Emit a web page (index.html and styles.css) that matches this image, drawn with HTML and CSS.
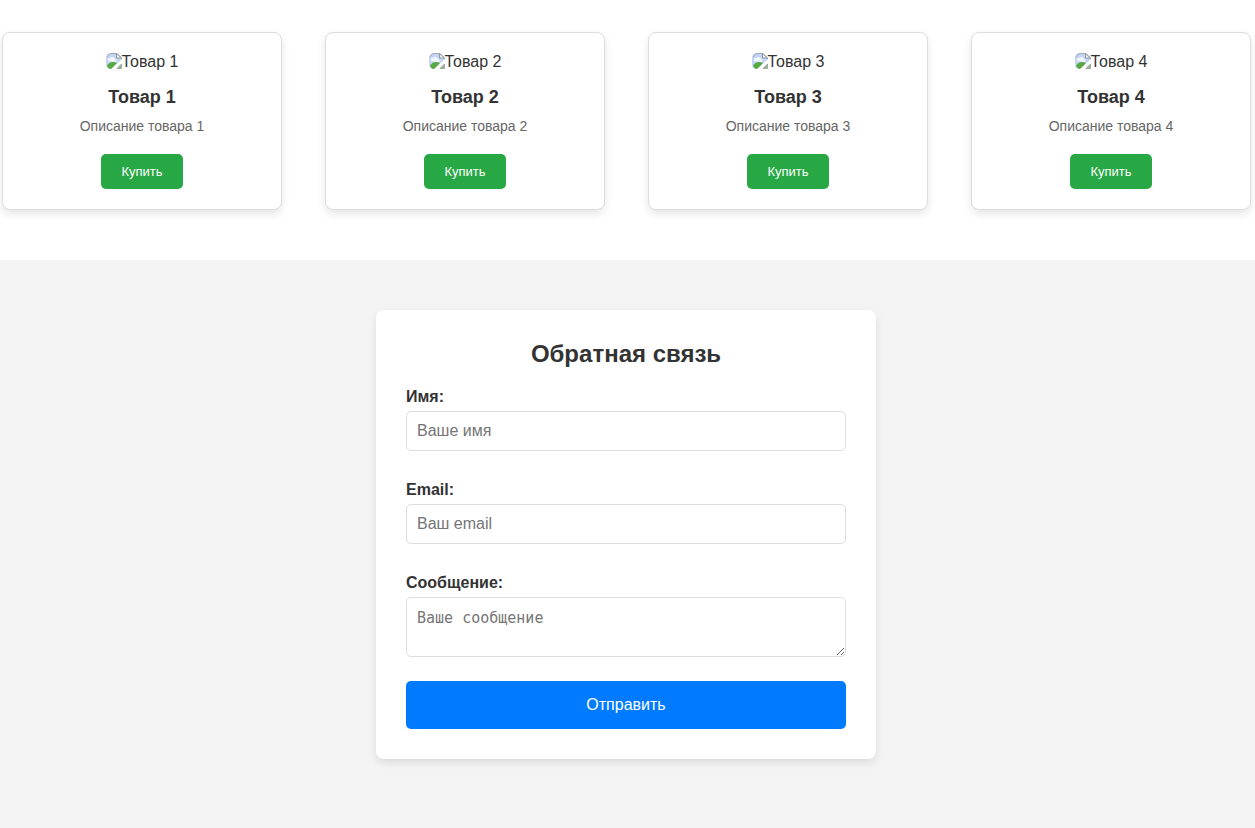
FILE: index.html
```
<!DOCTYPE html>
<html lang="ru">
<head>
    <meta charset="UTF-8">
    <meta name="viewport" content="width=device-width, initial-scale=1.0">
    <title>Магазин</title>
    <link rel="stylesheet" href="styles.css">
</head>
<body>
    <svg class="sprite" aria-hidden="true">
        <symbol id="no-image" viewBox="0 0 16 16">
            <path d="M5 0h6l4 4v4l-8 8H5a5 5 0 0 1-5-5V5a5 5 0 0 1 5-5z" fill="#c3d5f3"/>
            <path d="M2 8a2 2 0 0 1 2-3 3 3 0 0 1 5 1 2 2 0 0 1 1 3z" fill="#f3f7fd"/>
            <path d="M1 13c2-4 6-5 10-3l-5 6H5c-2 0-3-1-4-3z" fill="#58a942"/>
            <path d="M1 4a5 5 0 0 1 4-3.500h5.500L15.500 5v3" fill="none" stroke="#a3a9b3"/>
            <path d="M10.500 .500l5 4.500h-5z" fill="#f2f2f2" stroke="#8f96a1"/>
            <path d="M5 16L16 6v3l-7 7z" fill="#fff"/>
            <path d="M15.500 11v4.500H11z" fill="#8dbb86" stroke="#a5a5a5"/>
        </symbol>
    </svg>

    <!-- Товары -->
    <section class="products">
        <div class="product-card">
            <div class="product-image"><svg><use href="#no-image"/></svg>Товар 1</div>
            <h3>Товар 1</h3>
            <p>Описание товара 1</p>
            <button type="button">Купить</button>
        </div>
        <div class="product-card">
            <div class="product-image"><svg><use href="#no-image"/></svg>Товар 2</div>
            <h3>Товар 2</h3>
            <p>Описание товара 2</p>
            <button type="button">Купить</button>
        </div>
        <div class="product-card">
            <div class="product-image"><svg><use href="#no-image"/></svg>Товар 3</div>
            <h3>Товар 3</h3>
            <p>Описание товара 3</p>
            <button type="button">Купить</button>
        </div>
        <div class="product-card">
            <div class="product-image"><svg><use href="#no-image"/></svg>Товар 4</div>
            <h3>Товар 4</h3>
            <p>Описание товара 4</p>
            <button type="button">Купить</button>
        </div>
    </section>

    <!-- Обратная связь -->
    <section class="feedback">
        <form class="feedback-form">
            <h2>Обратная связь</h2>
            <div class="form-group">
                <label for="name">Имя:</label>
                <input type="text" id="name" name="name" placeholder="Ваше имя" required>
            </div>
            <div class="form-group">
                <label for="email">Email:</label>
                <input type="email" id="email" name="email" placeholder="Ваш email" required>
            </div>
            <div class="form-group">
                <label for="message">Сообщение:</label>
                <textarea id="message" name="message" placeholder="Ваше сообщение" required></textarea>
            </div>
            <button type="submit">Отправить</button>
        </form>
    </section>
</body>
</html>
```

FILE: styles.css
```
* {
    box-sizing: border-box;
    margin: 0;
    padding: 0;
}

body {
    font-family: Arial, "Liberation Sans", sans-serif;
    background: #f4f4f4;
    color: #333;
}

.sprite {
    display: none;
}

.products {
    display: flex;
    flex-wrap: wrap;
    justify-content: space-between;
    gap: 20px;
    padding: 32px 4px 50px 2px;
    background: #fff;
}

.product-card {
    width: 280px;
    padding: 20px;
    text-align: center;
    background: #fff;
    border: 1px solid #ddd;
    border-radius: 8px;
    box-shadow: 0 4px 8px rgba(0, 0, 0, 0.1);
}

.product-image {
    display: flex;
    justify-content: center;
    line-height: 18px;
    margin-bottom: 15px;
}

.product-image svg {
    width: 16px;
    height: 16px;
}

.product-card h3 {
    font-size: 18px;
    line-height: 22px;
    margin-bottom: 10px;
}

.product-card p {
    font-size: 14px;
    line-height: 16px;
    color: #666;
    margin-bottom: 20px;
}

.product-card button {
    padding: 10px 20px;
    font-family: inherit;
    font-size: 13px;
    line-height: 15px;
    color: #fff;
    background: #28a745;
    border: none;
    border-radius: 5px;
    cursor: pointer;
}

.product-card button:hover {
    background: #218838;
}

.feedback {
    padding: 50px 3px 50px 0;
}

.feedback-form {
    max-width: 500px;
    margin: 0 auto;
    padding: 30px;
    background: #fff;
    border-radius: 8px;
    box-shadow: 0 4px 8px rgba(0, 0, 0, 0.1);
}

.feedback-form h2 {
    font-size: 24px;
    line-height: 28px;
    text-align: center;
    margin-bottom: 20px;
}

.form-group {
    margin-bottom: 30px;
}

.form-group:last-of-type {
    margin-bottom: 24px;
}

.form-group label {
    display: block;
    font-weight: bold;
    line-height: 18px;
    margin-bottom: 5px;
}

.form-group input,
.form-group textarea {
    display: block;
    width: 100%;
    height: 40px;
    padding: 10px;
    font-family: inherit;
    font-size: 16px;
    background: #fff;
    border: 1px solid #ddd;
    border-radius: 5px;
}

.form-group textarea {
    height: 60px;
    font-family: Consolas, "DejaVu Sans Mono", monospace;
    font-size: 15px;
    line-height: 20px;
    resize: vertical;
}

.feedback-form button {
    display: block;
    width: 100%;
    padding: 15px;
    font-family: inherit;
    font-size: 16px;
    line-height: 18px;
    color: #fff;
    background: #007bff;
    border: none;
    border-radius: 5px;
    cursor: pointer;
}

.feedback-form button:hover {
    background: #0056b3;
}
```
